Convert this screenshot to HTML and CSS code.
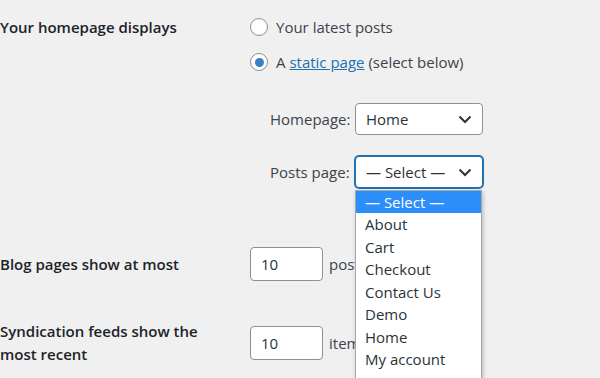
FILE: index.html
```html
<!DOCTYPE html>
<html lang="en">
<head>
    <meta charset="UTF-8">
    <title>Reading Settings</title>
    <link rel="stylesheet" href="styles.css">
</head>
<body>
    <div class="settings">
        <div class="row row-top">
            <div class="row-label">Your homepage displays</div>
            <div class="row-field">
                <label class="radio-line">
                    <span class="radio"></span>
                    Your latest posts
                </label>
                <label class="radio-line radio-second">
                    <span class="radio checked"></span>
                    A&nbsp;<a href="#" class="link">static page</a>&nbsp;(select below)
                </label>

                <div class="page-pickers">
                    <div class="picker picker-home">
                        <span class="picker-label">Homepage:</span>
                        <div class="select">
                            <span>Home</span>
                            <svg class="chevron" width="14" height="9" viewBox="0 0 14 9">
                                <path d="M1.5 1.5 L7 7 L12.5 1.5" fill="none" stroke="#2c3338" stroke-width="2"/>
                            </svg>
                        </div>
                    </div>
                    <div class="picker picker-posts">
                        <span class="picker-label">Posts page:</span>
                        <div class="select select-focus">
                            <span>— Select —</span>
                            <svg class="chevron" width="14" height="9" viewBox="0 0 14 9">
                                <path d="M1.5 1.5 L7 7 L12.5 1.5" fill="none" stroke="#2c3338" stroke-width="2"/>
                            </svg>
                        </div>
                        <ul class="dropdown">
                            <li class="active">— Select —</li>
                            <li>About</li>
                            <li>Cart</li>
                            <li>Checkout</li>
                            <li>Contact Us</li>
                            <li>Demo</li>
                            <li>Home</li>
                            <li>My account</li>
                            <li>Posts</li>
                        </ul>
                    </div>
                </div>
            </div>
        </div>

        <div class="row row-blog">
            <div class="row-label">Blog pages show at most</div>
            <div class="row-field inline">
                <input class="num" type="text" value="10">
                <span class="unit">posts</span>
            </div>
        </div>

        <div class="row row-feed">
            <div class="row-label">Syndication feeds show the most recent</div>
            <div class="row-field inline">
                <input class="num" type="text" value="10">
                <span class="unit">items</span>
            </div>
        </div>
    </div>
</body>
</html>
```

FILE: styles.css
```css
* {
    margin: 0;
    padding: 0;
    box-sizing: border-box;
}

html, body {
    height: 100%;
    overflow: hidden;
}

body {
    background-color: #f0f0f1;
    color: #3c434a;
    font-family: "Open Sans", "Noto Sans", sans-serif;
    font-size: 15px;
    line-height: 22px;
}

.settings {
    padding-top: 16px;
}

.row {
    display: grid;
    grid-template-columns: 250px 1fr;
    align-items: center;
}

.row-top {
    align-items: start;
}

.row-label {
    color: #1d2327;
    font-weight: 600;
    width: 205px;
}

.row-blog {
    margin-top: 59px;
}

.row-feed {
    margin-top: 39px;
    line-height: 23px;
}

.radio-line {
    display: flex;
    align-items: center;
    height: 22px;
}

.radio-second {
    margin-top: 13px;
}

.radio {
    width: 18px;
    height: 18px;
    border: 1px solid #8c8f94;
    border-radius: 50%;
    background-color: #fff;
    margin-right: 8px;
    display: flex;
    align-items: center;
    justify-content: center;
}

.radio.checked::after {
    content: "";
    width: 9px;
    height: 9px;
    border-radius: 50%;
    background-color: #3582c4;
}

.link {
    color: #2271b1;
    text-decoration: underline;
}

.page-pickers {
    padding-left: 20px;
}

.picker {
    display: flex;
    align-items: center;
    position: relative;
}

.picker-home {
    margin-top: 30px;
}

.picker-posts {
    margin-top: 21px;
}

.picker-label {
    width: 85px;
}

.select {
    width: 128px;
    height: 32px;
    border: 1px solid #8c8f94;
    border-radius: 4px;
    background-color: #fff;
    color: #2c3338;
    padding: 0 10px 0 10px;
    display: flex;
    align-items: center;
    justify-content: space-between;
}

.select-focus {
    border-color: #2271b1;
    box-shadow: 0 0 0 1px #2271b1;
}

.dropdown {
    position: absolute;
    left: 85px;
    top: 34px;
    width: 127px;
    list-style: none;
    background-color: #fff;
    border: 1px solid #a7aaad;
    box-shadow: 1px 2px 4px rgba(0, 0, 0, 0.25);
    color: #2c3338;
    z-index: 10;
}

.dropdown li {
    line-height: 22.5px;
    padding-left: 9px;
}

.dropdown li.active {
    line-height: 22px;
    background-color: #2c8ef8;
    color: #fff;
}

.inline {
    display: flex;
    align-items: center;
}

.num {
    width: 73px;
    height: 34px;
    border: 1px solid #8c8f94;
    border-radius: 4px;
    background-color: #fff;
    color: #2c3338;
    padding-left: 10px;
    font-family: inherit;
    font-size: 15px;
}

.unit {
    margin-left: 6px;
}
```
